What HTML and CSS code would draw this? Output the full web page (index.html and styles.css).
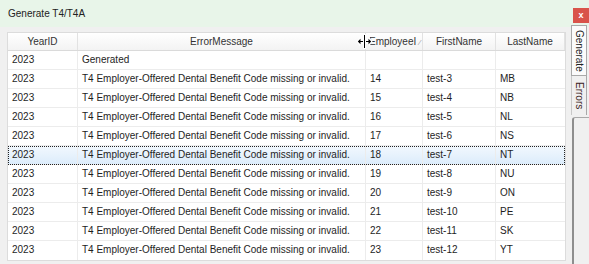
FILE: index.html
```html
<!DOCTYPE html>
<html lang="en">
<head>
  <meta charset="UTF-8" />
  <title>Generate T4/T4A</title>
  <link rel="stylesheet" href="styles.css">
</head>
<body>
  <div class="window">
    <div class="titlebar">
      <span class="title">Generate T4/T4A</span>
      <button class="close-btn">x</button>
    </div>

    <div class="main">
      <div class="grid-wrap">
        <div class="grid">
          <div class="row head">
            <div class="cell">YearID</div>
            <div class="cell">ErrorMessage</div>
            <div class="cell left">EmployeeI<span class="sort">&#8260;</span></div>
            <div class="cell">FirstName</div>
            <div class="cell">LastName</div>
          </div>
          <div class="row">
            <div class="cell">2023</div>
            <div class="cell">Generated</div>
            <div class="cell"></div>
            <div class="cell"></div>
            <div class="cell"></div>
          </div>
          <div class="row">
            <div class="cell">2023</div>
            <div class="cell">T4 Employer-Offered Dental Benefit Code missing or invalid.</div>
            <div class="cell">14</div>
            <div class="cell">test-3</div>
            <div class="cell">MB</div>
          </div>
          <div class="row">
            <div class="cell">2023</div>
            <div class="cell">T4 Employer-Offered Dental Benefit Code missing or invalid.</div>
            <div class="cell">15</div>
            <div class="cell">test-4</div>
            <div class="cell">NB</div>
          </div>
          <div class="row">
            <div class="cell">2023</div>
            <div class="cell">T4 Employer-Offered Dental Benefit Code missing or invalid.</div>
            <div class="cell">16</div>
            <div class="cell">test-5</div>
            <div class="cell">NL</div>
          </div>
          <div class="row">
            <div class="cell">2023</div>
            <div class="cell">T4 Employer-Offered Dental Benefit Code missing or invalid.</div>
            <div class="cell">17</div>
            <div class="cell">test-6</div>
            <div class="cell">NS</div>
          </div>
          <div class="row selected">
            <div class="cell">2023</div>
            <div class="cell">T4 Employer-Offered Dental Benefit Code missing or invalid.</div>
            <div class="cell">18</div>
            <div class="cell">test-7</div>
            <div class="cell">NT</div>
          </div>
          <div class="row">
            <div class="cell">2023</div>
            <div class="cell">T4 Employer-Offered Dental Benefit Code missing or invalid.</div>
            <div class="cell">19</div>
            <div class="cell">test-8</div>
            <div class="cell">NU</div>
          </div>
          <div class="row">
            <div class="cell">2023</div>
            <div class="cell">T4 Employer-Offered Dental Benefit Code missing or invalid.</div>
            <div class="cell">20</div>
            <div class="cell">test-9</div>
            <div class="cell">ON</div>
          </div>
          <div class="row">
            <div class="cell">2023</div>
            <div class="cell">T4 Employer-Offered Dental Benefit Code missing or invalid.</div>
            <div class="cell">21</div>
            <div class="cell">test-10</div>
            <div class="cell">PE</div>
          </div>
          <div class="row">
            <div class="cell">2023</div>
            <div class="cell">T4 Employer-Offered Dental Benefit Code missing or invalid.</div>
            <div class="cell">22</div>
            <div class="cell">test-11</div>
            <div class="cell">SK</div>
          </div>
          <div class="row">
            <div class="cell">2023</div>
            <div class="cell">T4 Employer-Offered Dental Benefit Code missing or invalid.</div>
            <div class="cell">23</div>
            <div class="cell">test-12</div>
            <div class="cell">YT</div>
          </div>
        </div>
      </div>

      <div class="tabs">
        <div class="tab active">Generate</div>
        <div class="tab">Errors</div>
        <div class="tab-rest"></div>
      </div>
    </div>

    <!-- resize cursor over the header -->
    <svg class="cursor" width="17" height="15" viewBox="0 0 17 15">
      <path d="M7 0h3v5h3V2.5L16.5 7.5 13 12.5V10h-3v5H7v-5H4v2.5L0.5 7.5 4 2.5V5h3z" fill="#fff"/>
      <path d="M8 1h1v13H8zM1.8 7.5L4.5 4.8V7h2.5v1H4.5v2.2zM15.2 7.5L12.5 4.8V7H10v1h2.5v2.2z" fill="#000"/>
    </svg>
  </div>
</body>
</html>
```

FILE: styles.css
```css
body {
  margin: 0;
  font-family: "Liberation Sans", Arial, sans-serif;
  font-size: 10px;
  color: #1e1e1e;
}
.window {
  position: relative;
  width: 589px;
  height: 264px;
  background: #f0f0f0;
  overflow: hidden;
}
.titlebar {
  height: 27px;
  background: #e8f5e9;
  display: flex;
  align-items: center;
  padding-left: 8px;
  box-sizing: border-box;
}
.title {
  font-size: 10px;
  color: #222;
}
.close-btn {
  margin-left: auto;
  align-self: flex-start;
  margin-top: 8px;
  width: 16px;
  height: 15px;
  padding: 0 0 2px 0;
  border: none;
  background: #d9534a;
  color: #fff;
  font-family: "Liberation Sans", Arial, sans-serif;
  font-size: 9px;
  font-weight: bold;
  line-height: 12px;
}
.main {
  display: flex;
  height: 237px;
}
.grid-wrap {
  width: 564px;
  padding: 5px 0 0 7px;
}
.grid {
  width: 559px;
  background: #fff;
  border: 1px solid #dcdcdc;
  box-sizing: border-box;
}
.row {
  display: grid;
  grid-template-columns: 70px 288px 57px 73px 69px;
  height: 19px;
  border-bottom: 1px solid #ececec;
  box-sizing: border-box;
}
.row:last-child {
  border-bottom: none;
}
.cell {
  padding: 0 4px;
  line-height: 18px;
  white-space: nowrap;
  overflow: hidden;
  border-right: 1px solid #ececec;
}
.cell:last-child {
  border-right: none;
}
.row.head {
  height: 18px;
  background: linear-gradient(#ffffff, #f3f3f3);
  border-bottom: 1px solid #dadada;
  color: #333;
}
.row.head .cell {
  text-align: center;
  line-height: 17px;
  border-right: 1px solid #e2e2e2;
}
.row.head .cell.left {
  text-align: left;
  padding-left: 3px;
}
.sort {
  color: #9a9a9a;
  font-size: 8px;
  margin-left: 3px;
}
.row.selected {
  background: linear-gradient(#f2f8fe, #dcecfb);
  outline: 1px dotted #222;
  outline-offset: -1px;
}
.tabs {
  width: 18px;
  display: flex;
  flex-direction: column;
  margin-top: -2px;
}
.tab {
  writing-mode: vertical-rl;
  width: 16px;
  box-sizing: border-box;
  text-align: center;
  color: #222;
  font-size: 10px;
  border-left: 1px solid #a9a9a9;
  border-right: 1px solid #a9a9a9;
}
.tab.active {
  height: 51px;
  background: #fbfbfb;
  border-top: 1px solid #a9a9a9;
  border-bottom: 1px solid #a9a9a9;
  line-height: 14px;
}
.tab:not(.active) {
  height: 39px;
  background: #f0f0f0;
  border-left-color: #c8c8c8;
  line-height: 14px;
  color: #3a2222;
}
.tab-rest {
  flex: 1;
  margin-top: 2px;
  margin-left: 1px;
  border-left: 2px solid #8e8e8e;
  border-top: 1px solid #a9a9a9;
  border-top-left-radius: 3px;
}
.cursor {
  position: absolute;
  left: 356px;
  top: 34px;
}
```
